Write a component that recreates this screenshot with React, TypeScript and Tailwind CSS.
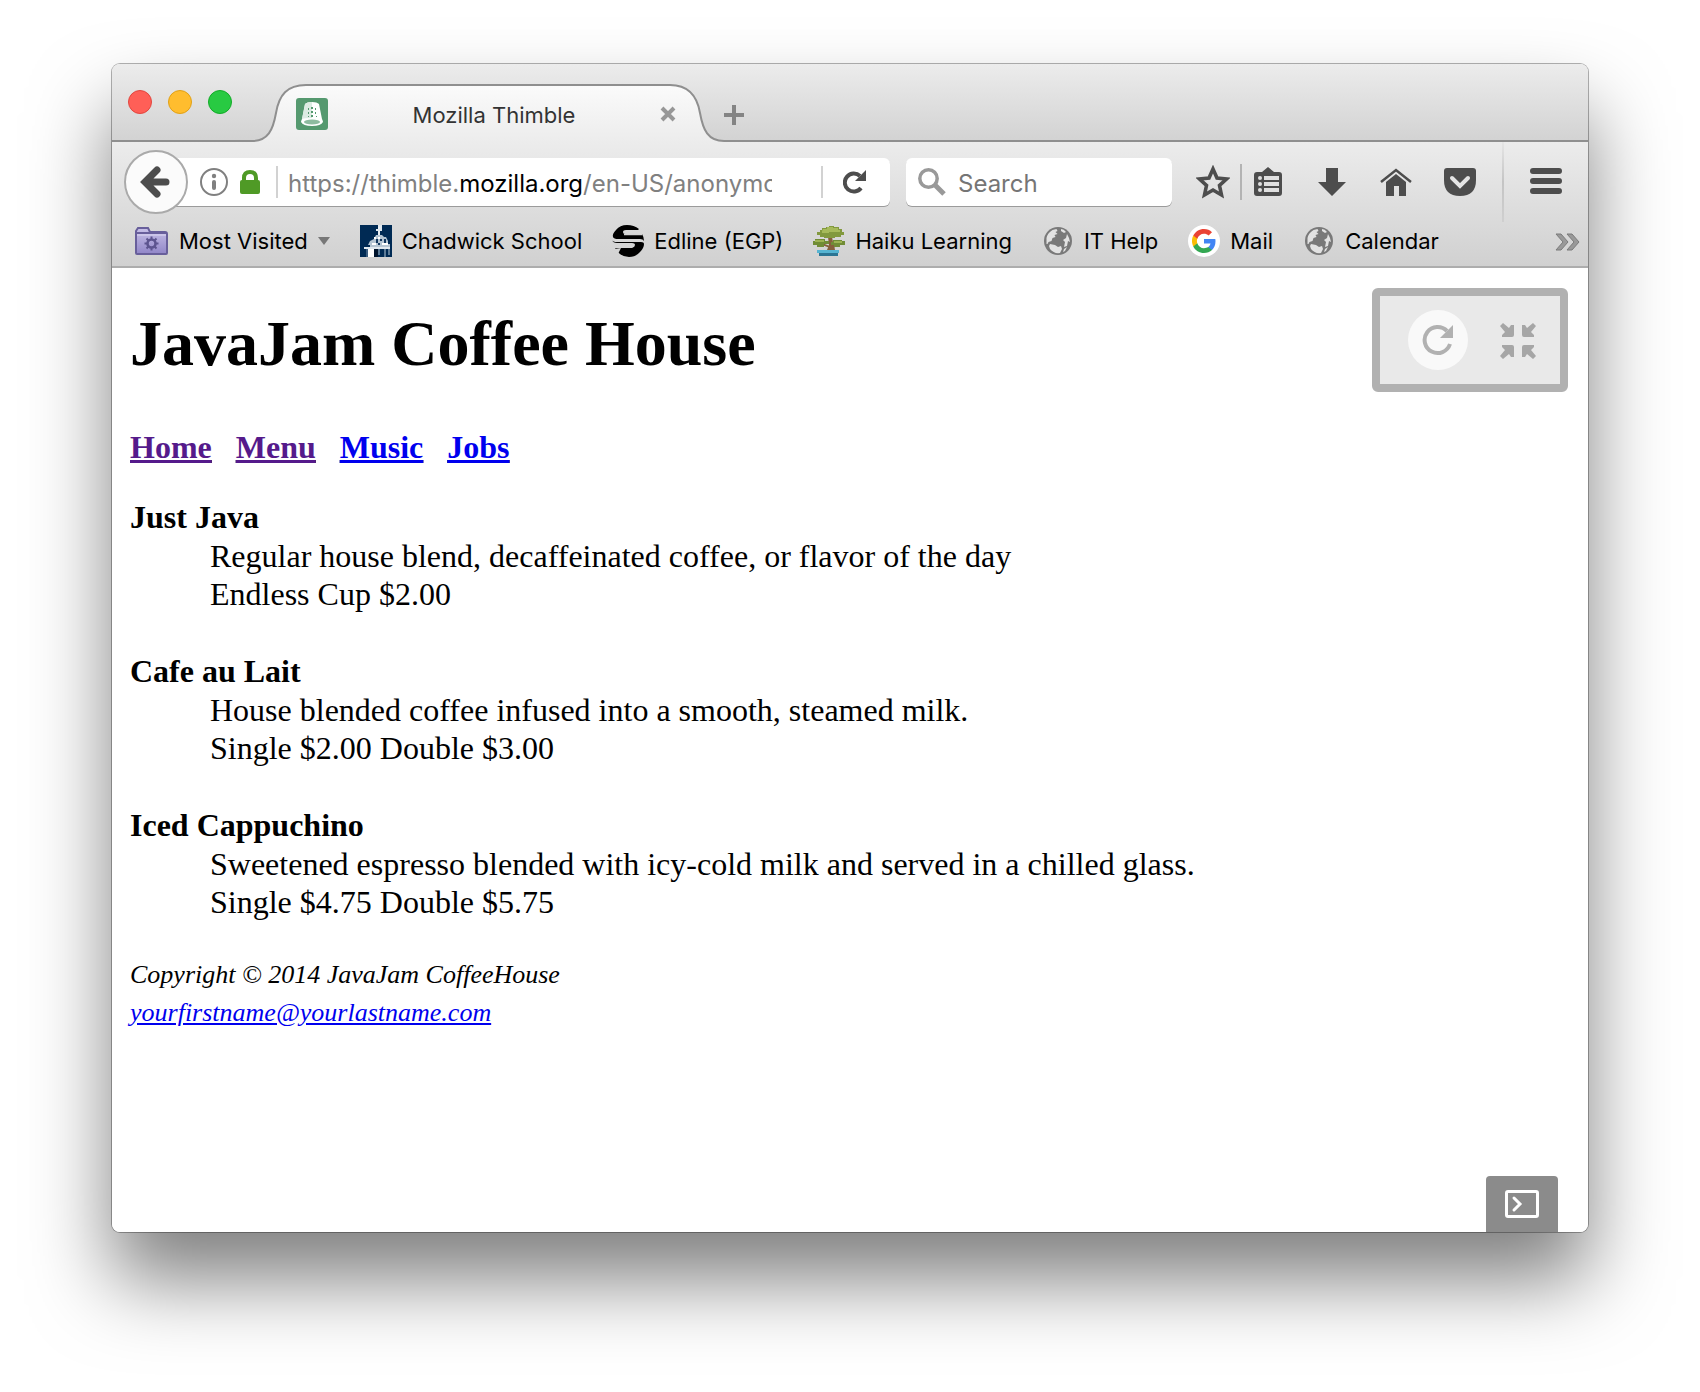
import React from "react";

const G = "#4d4d4d";

type Bookmark = { label: string; icon: React.ReactNode; menu?: boolean };

const FolderIcon = () => (
  <svg width="34" height="32" viewBox="0 0 34 32">
    <defs>
      <linearGradient id="fold" x1="0" y1="0" x2="0" y2="1">
        <stop offset="0" stopColor="#c8c1e8" />
        <stop offset="1" stopColor="#9186c8" />
      </linearGradient>
    </defs>
    <path d="M1 28V6l2-3h10l2 4h15q2 0 2 2v19q0 1-1 1H2q-1 0-1-1z" fill="url(#fold)" stroke="#685f9b" strokeWidth="2" />
    <path d="M2 8h29" stroke="#685f9b" strokeWidth="2" />
    <path d="M2 10h29" stroke="#dcd7f2" strokeWidth="1" />
    <circle cx="16.500" cy="18.500" r="4" fill="none" stroke="#5d548f" strokeWidth="2.600" />
    <path d="M16.500 11.500v3M16.500 22.500v3M9.500 18.500h3M20.500 18.500h3M11.500 13.500l2 2M19.500 21.500l2 2M21.500 13.500l-2 2M13.500 21.500l-2 2" stroke="#5d548f" strokeWidth="2" />
  </svg>
);

const ChadwickIcon = () => (
  <svg width="32" height="32" viewBox="0 0 32 32">
    <rect width="32" height="32" fill="#002a54" />
    <path d="M18 0h4v2h-4zM20 2h2v2h-2zM16 4h6v2h-6z" fill="#dfe7ee" />
    <path d="M18 2h2v2h-2zM18 6h2v4h-2z" fill="#e9eff4" />
    <path d="M16 10h6l2 2h2l2 4v3h2v3H10v-2H8l2-4 4-2z" fill="#b4c4d2" />
    <path d="M14 12h2v2h-2zM18 12h2v2h-2zM12 18h4v2h-4zM22 18h6v2h-6z" fill="#fff" />
    <path d="M16 14h2v4h-2zM20 14h2v2h-2zM24 14h2v4h-2zM18 18h2v2h-2z" fill="#12375f" />
    <path d="M4 22h26v2H4z" fill="#dfe7ee" />
    <path d="M8 24h6v8H8z" fill="#fff" />
    <path d="M6 24h2v8H6z" fill="#3c5e80" />
    <path d="M14 24h4v8h-4z" fill="#00142c" />
    <path d="M18 24h2v6h-2zM24 24h2v8h-2zM28 24h2v6h-2z" fill="#5c7a96" />
  </svg>
);

const EdlineIcon = () => (
  <svg width="32" height="32" viewBox="0 0 32 32">
    <path d="M27 4Q22 0 15 0 8 0 4 5 0 9 1 12q1 2 5 2h22q3 0 4 2 0-4-2-7H13q-2 0-2-2 0-2 3-2h12z" fill="#000" />
    <path d="M0 15q1 3 5 3h15q3 0 3 2t-3 3H3q5 9 14 9 7 0 11-5 4-4 4-8 0-2-3-2H5q-4 0-5-2z" fill="#000" />
    <path d="M12 9.500h18M2 19h18" stroke="#d4d4d4" strokeWidth="1.500" />
    <path d="M2 24l7-1-3 6z" fill="#d4d4d4" />
  </svg>
);

const BonsaiIcon = () => (
  <svg width="32" height="32" viewBox="0 0 32 32">
    <path d="M15 12h4l1 5 4-1-3 4 1 5h-8l2-5z" fill="#86603c" />
    <path d="M9 18l8 3v2l-8-3zM26 18l-6 3v2l6-3z" fill="#86603c" />
    <path d="M9 3h4V2h3V1h5v1h5v2h3v3h2v3h-3v2h-6v1H11v-1H7v-2H4V7h3V5h2z" fill="#82993e" />
    <path d="M10 4h4V2h6v1h5v2h2v2H16v1H9V6z" fill="#a6ba5a" />
    <path d="M2 14h10v2h4v3h-5v3H4v-2H0v-4h2zM20 15h9v1h3v4h-5v2h-6v-2h-3v-3h2z" fill="#718c36" />
    <path d="M2 15h9v2H2zM21 16h8v2h-8z" fill="#9db353" />
    <path d="M4 25h22v3H4z" fill="#55b4d2" />
    <path d="M6 28h19v3H6z" fill="#2b7594" />
  </svg>
);

const GlobeIcon = () => (
  <svg width="32" height="28" viewBox="-2 0 32 28">
    <circle cx="14" cy="14" r="14" fill="#797979" />
    <path d="M2.500 11q1-5 6-8l4-1 1 2-2 1 2 2-3 1 1 2-3 1-1 3-3 1-1 2-1 0z" fill="#e2e2e2" />
    <path d="M17 2q3 0 5 3l-2 1-3-2zM23 7l2 4 1 4-2-1-1 5-3 1 1-5-2-2 3-2z" fill="#e2e2e2" />
    <path d="M6 17l5 1 3 2 3-1 1 3-2 4q-6 1-10-4l-1-3z" fill="#e2e2e2" />
    <path d="M20 22l3-2-2 4-2 1z" fill="#e2e2e2" />
  </svg>
);

const GoogleIcon = () => (
  <svg width="32" height="32" viewBox="0 0 32 32">
    <circle cx="16" cy="16" r="16" fill="#fff" />
    <g transform="translate(4 4)">
      <path d="M23.500 12.300c0-.8-.1-1.600-.2-2.300H12v4.500h6.500c-.3 1.500-1.100 2.800-2.400 3.600v3h3.900c2.200-2.100 3.500-5.100 3.500-8.800z" fill="#4285f4" />
      <path d="M12 24c3.200 0 6-1.100 8-2.900l-3.900-3c-1.100.7-2.500 1.200-4.100 1.200-3.100 0-5.800-2.100-6.700-5H1.300v3.100C3.300 21.300 7.300 24 12 24z" fill="#34a853" />
      <path d="M5.300 14.300c-.2-.7-.4-1.500-.4-2.300s.1-1.600.4-2.300V6.600h-4C.5 8.200 0 10.100 0 12s.5 3.800 1.300 5.400z" fill="#fbbc05" />
      <path d="M12 4.800c1.800 0 3.300.6 4.600 1.800L20 3.200C18 1.200 15.200 0 12 0 7.300 0 3.300 2.700 1.300 6.600l4 3.100c.9-2.800 3.600-4.900 6.700-4.900z" fill="#ea4335" />
    </g>
  </svg>
);

const bookmarks: Bookmark[] = [
  { label: "Most Visited", icon: <FolderIcon />, menu: true },
  { label: "Chadwick School", icon: <ChadwickIcon /> },
  { label: "Edline (EGP)", icon: <EdlineIcon /> },
  { label: "Haiku Learning", icon: <BonsaiIcon /> },
  { label: "IT Help", icon: <GlobeIcon /> },
  { label: "Mail", icon: <GoogleIcon /> },
  { label: "Calendar", icon: <GlobeIcon /> },
];

const menu = [
  { name: "Just Java", lines: ["Regular house blend, decaffeinated coffee, or flavor of the day", "Endless Cup $2.00"] },
  { name: "Cafe au Lait", lines: ["House blended coffee infused into a smooth, steamed milk.", "Single $2.00 Double $3.00"] },
  { name: "Iced Cappuchino", lines: ["Sweetened espresso blended with icy-cold milk and served in a chilled glass.", "Single $4.75 Double $5.75"] },
];

function TabStrip() {
  return (
    <div className="flex h-[78px] items-end bg-linear-to-b from-[#ececec] to-[#d2d2d2]">
      <div className="flex h-full w-[140px] shrink-0 items-start gap-4 border-b-2 border-[#8f8f8f] pt-[26px] pl-4">
        <button aria-label="Close window" className="size-6 rounded-full border border-[#e2463f] bg-[#ff5f57]" />
        <button aria-label="Minimize window" className="size-6 rounded-full border border-[#e1a116] bg-[#ffbd2e]" />
        <button aria-label="Zoom window" className="size-6 rounded-full border border-[#12ac28] bg-[#28ca42]" />
      </div>
      <div className="relative h-[58px] w-[476px] shrink-0">
        <svg className="absolute inset-0" width="476" height="58" viewBox="0 0 476 58">
          <defs>
            <linearGradient id="tab" x1="0" y1="0" x2="0" y2="1">
              <stop offset="0" stopColor="#fbfbfb" />
              <stop offset="1" stopColor="#ececec" />
            </linearGradient>
          </defs>
          <path d="M0 57C16 57 21 46 24 29 27 11 35 1 54 1H418C436 1 445 11 448 29 451 46 456 57 472 57V58H0z" fill="url(#tab)" />
          <path d="M0 57C16 57 21 46 24 29 27 11 35 1 54 1H418C436 1 445 11 448 29 451 46 456 57 472 57H476" fill="none" stroke="#8f8f8f" strokeWidth="2" />
        </svg>
        <div className="relative flex h-full items-center pr-[52px] pl-11">
          <svg width="32" height="34" viewBox="0 -2 32 34" className="shrink-0">
            <rect width="32" height="32" rx="3" fill="#55996f" />
            <path d="M9 6q2-2 7-2t7 2l3 15q1 2 1 3-2 4-11 4T5 24q0-1 1-3z" fill="#fff" />
            <path d="M16 4q-5 0-7 2L6 21q3-1 10-1z" fill="#dcebe2" />
            <ellipse cx="16" cy="24" rx="8" ry="2.500" fill="#8dbb9f" />
            <path d="M12 10h1v2h-1zM15 9h2v2h-2zM19 10h1v2h-1zM12 14h1v2h-1zM15 13h2v2h-2zM19 14h1v2h-1zM12 18h1v1h-1zM15 17h2v2h-2zM20 18h1v1h-1z" fill="#55996f" />
          </svg>
          <span className="flex-1 pt-1 text-center text-[22px] text-[#333]">Mozilla Thimble</span>
          <button aria-label="Close tab" className="pt-0.5">
            <svg width="16" height="16" viewBox="0 0 16 16"><path d="M2 2l12 12M14 2L2 14" stroke="#979797" strokeWidth="4" /></svg>
          </button>
        </div>
      </div>
      <div className="flex h-[58px] flex-1 items-center border-b-2 border-[#8f8f8f]">
        <button aria-label="New tab" className="-ml-1 pt-1.5">
          <svg width="20" height="20" viewBox="0 0 20 20"><path d="M10 0v20M0 10h20" stroke="#848484" strokeWidth="4" /></svg>
        </button>
      </div>
    </div>
  );
}

function NavBar() {
  return (
    <div className="flex h-20 items-center">
      <button aria-label="Back" className="relative z-10 ml-3 flex size-16 shrink-0 items-center justify-center rounded-full border-2 border-[#aaa] bg-[#fbfbfb]">
        <svg width="32" height="32" viewBox="0 0 32 32"><path d="M17 4L5 16l12 12M6 16h20" fill="none" stroke={G} strokeWidth="7" strokeLinecap="round" /></svg>
      </button>
      <div className="-ml-3 flex h-12 flex-1 items-center rounded-r-md bg-white pl-6 shadow-[0_1px_0_#9b9b9b]">
        <button aria-label="Site information">
          <svg width="28" height="28" viewBox="0 0 28 28">
            <circle cx="14" cy="14" r="13" fill="none" stroke="#808080" strokeWidth="2" />
            <circle cx="14" cy="8" r="2.200" fill="#808080" />
            <path d="M14 14v6" stroke="#808080" strokeWidth="4" strokeLinecap="round" />
          </svg>
        </button>
        <svg className="ml-3" width="20" height="24" viewBox="0 0 20 24">
          <path d="M4 12V8q0-6 6-6t6 6v4" fill="none" stroke="#4f9a26" strokeWidth="4" />
          <rect y="10" width="20" height="14" rx="2" fill="#4f9a26" />
        </svg>
        <div className="ml-4 h-8 w-0.5 bg-[#d2d2d2]" />
        <div role="textbox" aria-label="Address" className="ml-2.5 w-[484px] overflow-hidden pt-1 text-[24px] whitespace-nowrap text-[#808080]">
          https://thimble.<span className="text-black">mozilla.org</span>/en-US/anonymo
        </div>
        <div className="ml-auto h-8 w-0.5 shrink-0 bg-[#d2d2d2]" />
        <button aria-label="Reload" className="mr-6 ml-5">
          <svg width="23" height="24" viewBox="0 0 23 24">
            <path d="M18 18A9 9 0 1 1 17 6" fill="none" stroke={G} strokeWidth="4" />
            <path d="M23 0v11H12z" fill={G} />
          </svg>
        </button>
      </div>
      <label className="ml-4 flex h-12 w-[266px] shrink-0 items-center rounded-md bg-white pl-3 shadow-[0_1px_0_#9b9b9b]">
        <svg width="28" height="28" viewBox="0 0 28 28" className="shrink-0"><circle cx="10.500" cy="10.500" r="8.700" fill="none" stroke="#999" strokeWidth="3.500" /><path d="M17 17l9 9" stroke="#999" strokeWidth="5" /></svg>
        <input aria-label="Search" placeholder="Search" className="ml-3 w-full min-w-0 bg-transparent pt-1 text-[24px] outline-none placeholder:text-[#757575]" />
      </label>
      <button aria-label="Bookmark this page" className="ml-6">
        <svg width="34" height="34" viewBox="0 0 34 34"><path d="M17 4l4 9 9.500 1-7 6.500 2 9.500L17 25l-8.500 5 2-9.500-7-6.500L13 13z" fill="none" stroke={G} strokeWidth="3.600" /></svg>
      </button>
      <div className="ml-2.5 h-9 w-0.5 bg-[#b3b3b3]" />
      <button aria-label="Show bookmarks" className="ml-3">
        <svg width="28" height="30" viewBox="0 0 28 30">
          <path d="M8 5l6-5 6 5h5q3 0 3 3v18q0 3-3 3H3q-3 0-3-3V8q0-3 3-3z" fill={G} />
          <path d="M10 11h15M10 17h15M10 23h15" stroke="#e0e0e0" strokeWidth="4" />
          <circle cx="6" cy="11" r="2" fill="#e0e0e0" /><circle cx="6" cy="17" r="2" fill="#e0e0e0" /><circle cx="6" cy="23" r="2" fill="#e0e0e0" />
        </svg>
      </button>
      <button aria-label="Downloads" className="ml-9">
        <svg width="28" height="28" viewBox="0 0 28 28"><path d="M8 0h12v14h8L14 28 0 14h8z" fill={G} /></svg>
      </button>
      <button aria-label="Home" className="ml-[34px]">
        <svg width="32" height="28" viewBox="0 0 32 28"><path d="M1 14L16 2l15 12" fill="none" stroke={G} strokeWidth="2.500" /><path d="M16 6l10 8v14h-7V18h-5v10H6V14z" fill={G} /></svg>
      </button>
      <button aria-label="Save to Pocket" className="ml-8">
        <svg width="32" height="28" viewBox="0 0 32 28"><path d="M3 0h26q3 0 3 3v9q0 16-16 16T0 12V3q0-3 3-3z" fill={G} /><path d="M8 10l8 8 8-8" fill="none" stroke="#e4e4e4" strokeWidth="4" strokeLinecap="round" /></svg>
      </button>
      <div className="ml-[26px] h-full w-0.5 bg-linear-to-b from-[#e6e6e6] via-[#c4c4c4] to-[#cfcfcf]" />
      <button aria-label="Open menu" className="mr-[26px] ml-[26px]">
        <svg width="32" height="28" viewBox="0 0 32 28"><path d="M3 3h26M3 13h26M3 23h26" stroke={G} strokeWidth="6" strokeLinecap="round" /></svg>
      </button>
    </div>
  );
}

function BookmarksBar() {
  return (
    <nav aria-label="Bookmarks" className="flex h-[46px] items-center border-b-2 border-[#adadad] px-6 pb-1.5">
      <div className="-ml-px flex flex-1 items-center gap-[30px]">
        {bookmarks.map((b) => (
          <button key={b.label} className="flex shrink-0 items-center gap-2.5 text-[22px] whitespace-nowrap text-black">
            {b.icon}
            {b.label}
            {b.menu && <svg width="12" height="8" viewBox="0 0 12 8"><path d="M0 0h12L6 8z" fill="#777" /></svg>}
          </button>
        ))}
      </div>
      <button aria-label="More bookmarks" className="-mr-4 pt-0.5">
        <svg width="25" height="18" viewBox="0 0 25 18"><path d="M1 1h5l7 8-7 8H1l7-8zM12 1h5l7 8-7 8h-5l7-8z" fill="#999" stroke="#7b7b7b" /></svg>
      </button>
    </nav>
  );
}

function PageContent() {
  return (
    <main className="relative flex-1 rounded-b-lg bg-white px-[18px] pt-[38px] font-['Liberation_Serif',serif] text-[32px] leading-[38px] text-black">
      <h1 className="text-[64px] leading-[76px] font-bold">JavaJam Coffee House</h1>
      <nav aria-label="Site" className="mt-[46px] flex gap-6 font-bold underline">
        <a href="#home" className="text-[#551a8b]">Home</a>
        <a href="#menu" className="text-[#551a8b]">Menu</a>
        <a href="#music" className="text-[#0000ee]">Music</a>
        <a href="#jobs" className="text-[#0000ee]">Jobs</a>
      </nav>
      <dl className="mt-8 flex flex-col gap-[39px]">
        {menu.map((m) => (
          <div key={m.name}>
            <dt className="leading-[39px] font-bold">{m.name}</dt>
            {m.lines.map((l) => <dd key={l} className="ml-20">{l}</dd>)}
          </div>
        ))}
      </dl>
      <footer className="mt-[35px] text-[26px] italic">
        <p>Copyright © 2014 JavaJam CoffeeHouse</p>
        <a href="mailto:yourfirstname@yourlastname.com" className="text-[#0000ee] underline">yourfirstname@yourlastname.com</a>
      </footer>
      <div className="absolute top-5 right-5 flex h-[104px] w-[196px] items-center rounded-md border-8 border-[#b1b1b1] bg-[#e9e9e9] pl-7">
        <button aria-label="Refresh preview" className="flex size-[60px] items-center justify-center rounded-full bg-[#f9f9f9]">
          <svg width="32" height="32" viewBox="0 0 32 32"><path d="M28 20A13 13 0 1 1 25 7" fill="none" stroke="#b1b1b1" strokeWidth="4" /><path d="M31 1v13H18z" fill="#b1b1b1" /></svg>
        </button>
        <button aria-label="Exit full screen" className="ml-8 pt-0.5">
          <svg width="36" height="36" viewBox="0 0 36 36">
            <path id="arrow" d="M0 3l3-3 6 5 2-3h3v10q0 2-2 2H2v-2l3-3z" fill="#a6a6a6" />
            <use href="#arrow" transform="matrix(-1 0 0 1 36 0)" />
            <use href="#arrow" transform="matrix(1 0 0 -1 0 36)" />
            <use href="#arrow" transform="matrix(-1 0 0 -1 36 36)" />
          </svg>
        </button>
      </div>
      <button aria-label="Open console" className="absolute right-[30px] bottom-0 flex h-14 w-[72px] items-center justify-center rounded-t bg-[#8b8b8b]">
        <svg width="34" height="28" viewBox="0 0 34 28"><rect x="1.500" y="1.500" width="31" height="25" rx="1.500" fill="none" stroke="#fff" strokeWidth="3" /><path d="M9 8l6 6-6 6" fill="none" stroke="#fff" strokeWidth="3" strokeLinecap="round" /></svg>
      </button>
    </main>
  );
}

export default function App() {
  return (
    <div className="flex min-h-screen flex-col overflow-hidden bg-white px-28 pt-16 pb-40 font-[Inter,sans-serif]">
      <div className="flex flex-1 flex-col rounded-lg shadow-[0_0_0_1px_rgba(0,0,0,0.3),0_48px_80px_rgba(0,0,0,0.5)]">
        <div className="overflow-hidden rounded-t-lg">
          <TabStrip />
          <div className="bg-linear-to-b from-[#ececec] to-[#d0d0d0]">
            <NavBar />
            <BookmarksBar />
          </div>
        </div>
        <PageContent />
      </div>
    </div>
  );
}
